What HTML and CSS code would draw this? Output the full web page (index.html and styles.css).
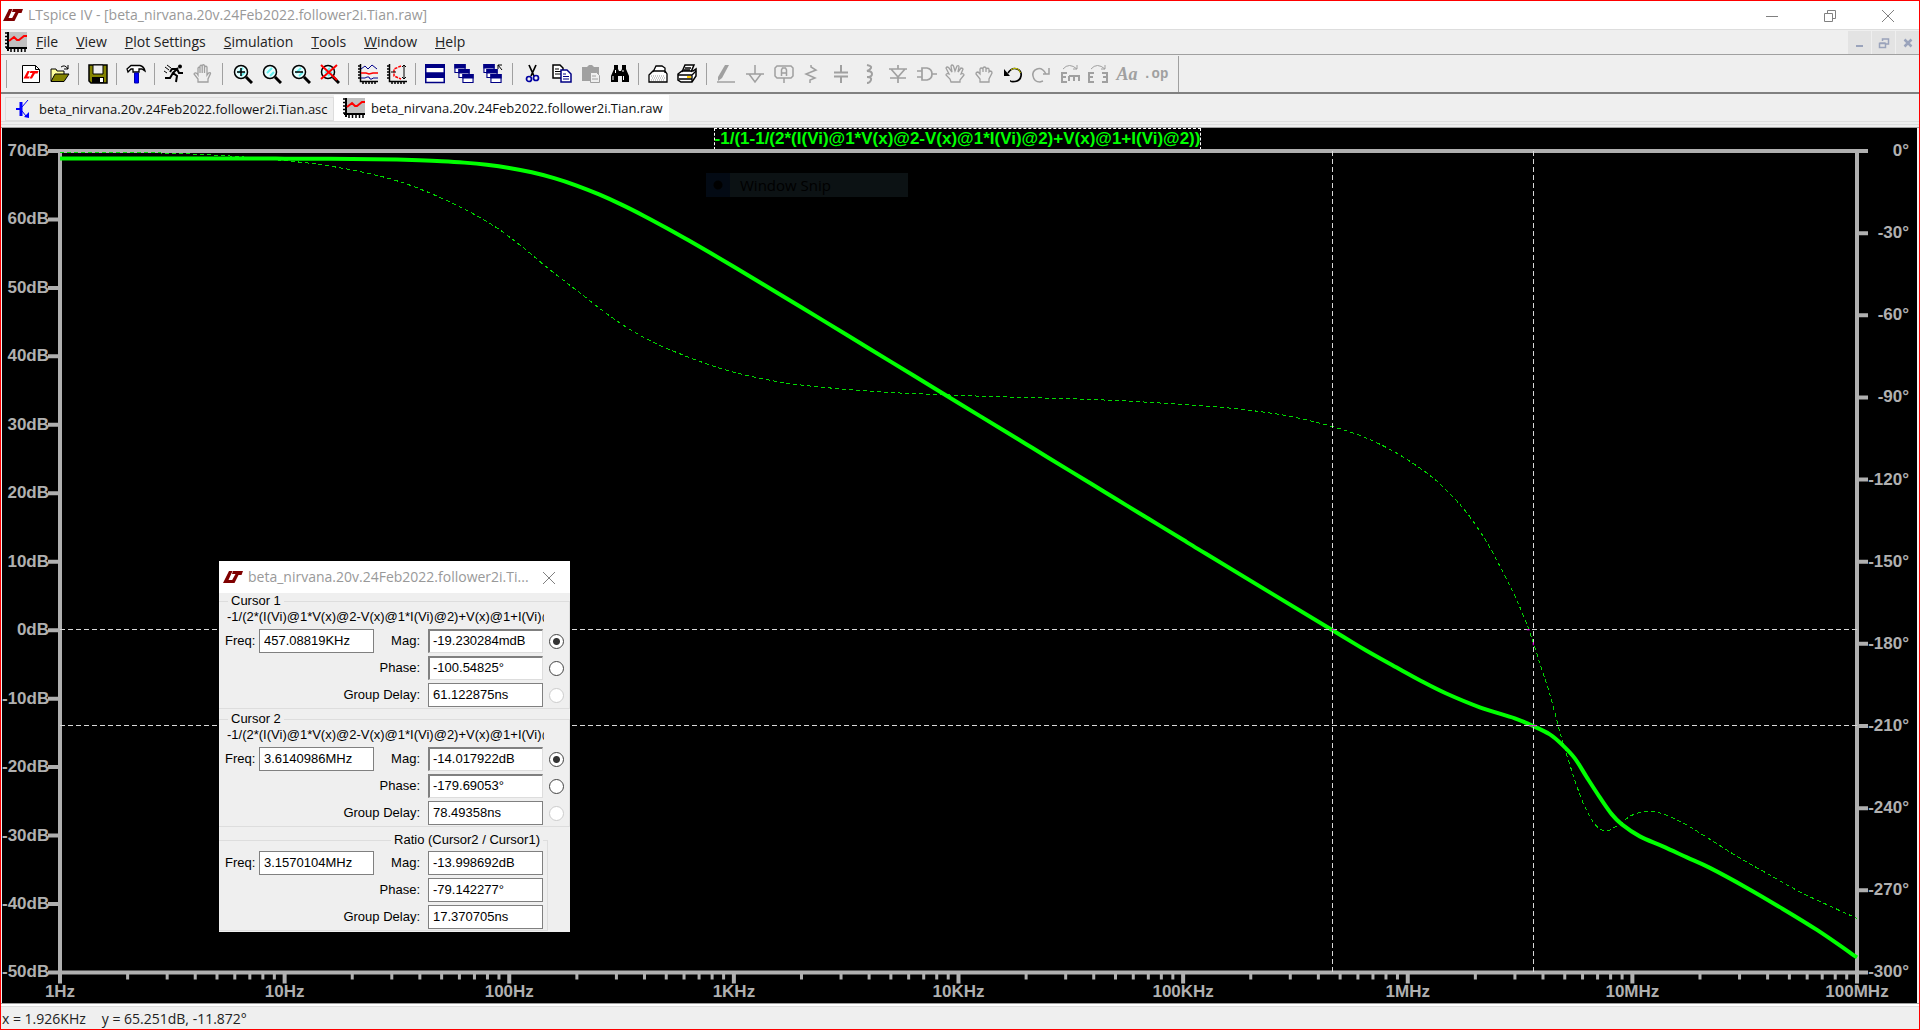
FILE: index.html
```html
<!DOCTYPE html>
<html lang="en">
<head>
<meta charset="utf-8">
<title>LTspice IV - [beta_nirvana.20v.24Feb2022.follower2i.Tian.raw]</title>
<link rel="stylesheet" href="styles.css">
<script src="plot.js" defer></script>
</head>
<body>
<svg class="defs" aria-hidden="true">
  <symbol id="logo" viewBox="0 0 20 14"><path fill="#7f0000" d="M6 1h3.500L5.500 10h4L8 13H0zM10 1h10l-1.500 4h-3l-4 8h-4l5-9H9z"/></symbol>
  <symbol id="wave" viewBox="0 0 22 22"><path fill="#c0c0c0" d="M3 1h19v15H3z"/><path stroke="#000" stroke-width="2" d="M3 1v19M1 17h21"/><path stroke="#000" stroke-width="1.5" d="M0 2h3M0 5.500h3M0 9h3M0 12.500h3M0 16h3M6 17v4M9.500 17v4M13 17v4M16.500 17v4M20 17v4"/><path fill="none" stroke="#f00" stroke-width="2" d="M4 10l5-4 3 3 2 0 5-4h3"/></symbol>
  <symbol id="lens" viewBox="0 0 20 20"><circle cx="8" cy="8" r="6.500" fill="#e8ffff" stroke="#000" stroke-width="1.500"/><path stroke="#6ee" stroke-width="2" d="M5 9l5-5M8 12l4-4"/><path stroke="#000" stroke-width="3" d="M13 13l6 6"/></symbol>
  <symbol id="win" viewBox="0 0 10 8"><path fill="#fff" stroke="#000084" d="M.5.5h9v7h-9z"/><path fill="#000084" d="M0 0h10v4H0z"/></symbol>
  <symbol id="axes" viewBox="0 0 20 20"><path fill="none" stroke="#000" stroke-width="1.500" d="M2.500 0v17.500H20M0 2h2M0 5h2M0 8h2M0 11h2M0 14h2M5 17v3M8 17v3M11 17v3M14 17v3M17 17v3"/></symbol>
  <symbol id="hand" viewBox="0 0 20 20"><path fill="none" stroke="currentColor" stroke-width="1.300" d="M5 18v-3L1 10q1-2 3-.5L5 11V4q1-1.500 2 0v5V2q1-1.500 2.200 0v7V1.500q1.300-1.500 2.300 0V9 3q1.500-1.500 2.500 0v8l1.500-2q2-1 2 .5L15 15v3z"/></symbol>
</svg>

<div class="window">
  <header class="titlebar">
    <svg class="logo"><use href="#logo"/></svg>
    <h1>LTspice IV - [beta_nirvana.20v.24Feb2022.follower2i.Tian.raw]</h1>
    <div class="caption-buttons">
      <button aria-label="Minimize"><svg viewBox="0 0 14 14"><path d="M1 7.500h12"/></svg></button>
      <button aria-label="Restore"><svg viewBox="0 0 14 14"><path d="M1.500 4.500h8v8h-8zM4.500 4V1.500h8v8H10"/></svg></button>
      <button aria-label="Close"><svg viewBox="0 0 14 14"><path d="M1 1l12 12M13 1L1 13"/></svg></button>
    </div>
  </header>

  <nav class="menubar">
    <svg class="wave"><use href="#wave"/></svg>
    <button><u>F</u>ile</button>
    <button><u>V</u>iew</button>
    <button><u>P</u>lot Settings</button>
    <button><u>S</u>imulation</button>
    <button><u>T</u>ools</button>
    <button><u>W</u>indow</button>
    <button><u>H</u>elp</button>
    <div class="child-buttons">
      <button aria-label="Minimize child"><svg viewBox="0 0 12 12"><path d="M2 9h7" stroke-width="2"/></svg></button>
      <button aria-label="Restore child"><svg viewBox="0 0 12 12"><path d="M1.500 6.500h6v4h-6zM1.500 6h6M4.500 4V2h6v5H8M4.500 2h6" stroke-width="1.500"/></svg></button>
      <button aria-label="Close child"><svg viewBox="0 0 12 12"><path d="M2.500 2.500l7 7M9.500 2.500l-7 7" stroke-width="2.500"/></svg></button>
    </div>
  </nav>

  <div class="toolbar">
    <div class="tools">
      <button aria-label="New schematic"><svg viewBox="0 0 20 20"><path fill="#fff" stroke="#000" d="M1.500 1.500h13l4 4v13h-17z"/><path fill="none" stroke="#000" d="M14.500 1.500v4h4"/><path fill="#f00" d="M6.500 7h2.300l-2.500 5.500h2.500l-1 2H2.500zM9.500 7h8l-1 2.500h-2.500l-3 5H8.500l3-5.500H8.700z"/></svg></button>
      <button aria-label="Open"><svg viewBox="0 0 20 20"><path fill="#ffff9c" stroke="#000" d="M1 17V5h5l1 2h7v3"/><path fill="#848400" stroke="#000" d="M1 17.500L5 10h14l-5 7.500z"/><path fill="none" stroke="#000" d="M11 3q4-3 7 2M18 1v4h-4"/></svg></button>
    </div>
    <i class="sep"></i>
    <div class="tools">
      <button aria-label="Save"><svg viewBox="0 0 20 20"><path fill="#848400" stroke="#000" stroke-width="1.500" d="M1 1h18v18H3l-2-2z"/><path fill="#efefef" stroke="#000" d="M5 1h10v9H5z"/><path fill="#000" d="M4 13h12v6H4z"/><path fill="#fff" d="M12 14h3v4h-3z"/></svg></button>
    </div>
    <i class="sep"></i>
    <div class="tools">
      <button aria-label="Control panel"><svg viewBox="0 0 20 20"><path fill="#fff" stroke="#000" stroke-width="1.300" d="M1 5l4-3.500h9q4 1 5 5.500l-3-2h-3v3H7V5H5L2 8z"/><path fill="#00f" stroke="#00a" d="M8.500 9h4v10h-4z"/></svg></button>
    </div>
    <i class="sep"></i>
    <div class="tools">
      <button aria-label="Run"><svg viewBox="0 0 20 20"><circle cx="16" cy="2.500" r="2"/><path fill="none" stroke="#000" stroke-width="2" d="M14 4l-5 5 4 3-1 6M9 9l-3 5H1M13 5l2 4h4M13 5H8L6 8"/><path stroke="#000" d="M1 3l4 3M3 1l4 3M0 7l3 2"/></svg></button>
      <button aria-label="Halt" disabled><svg><use href="#hand"/></svg></button>
    </div>
    <i class="sep wide"></i>
    <div class="tools">
      <button aria-label="Zoom in"><svg viewBox="0 0 20 20"><use href="#lens"/><path stroke="#000" stroke-width="1.500" d="M4 8h8M8 4v8"/></svg></button>
      <button aria-label="Zoom area"><svg><use href="#lens"/></svg></button>
      <button aria-label="Zoom out"><svg viewBox="0 0 20 20"><use href="#lens"/><path stroke="#000" stroke-width="1.500" d="M4 8h8"/></svg></button>
      <button aria-label="Zoom to fit"><svg viewBox="0 0 20 20"><use href="#lens"/><path stroke="#f00" stroke-width="2" d="M1 1l16 15M17 1L1 15"/></svg></button>
    </div>
    <i class="sep"></i>
    <div class="tools">
      <button aria-label="Autorange"><svg viewBox="0 0 20 20"><use href="#axes"/><path fill="none" stroke="#00008c" d="M3 5l4-3 3 3 4-4 5 4M3 14h4l2-1h2l1 2h2l1-1h5"/><path fill="none" stroke="#f00" stroke-width="1.500" d="M3 9h5l3 1 4-1h5"/></svg></button>
      <button aria-label="Pan"><svg viewBox="0 0 20 20"><use href="#axes"/><path fill="none" stroke="#f00" stroke-width="1.500" stroke-dasharray="3 1" d="M14 2L7 5v7l7 3"/><path fill="none" stroke="#000" d="M17 1v14M15 3l2-2 2 2M15 13l2 2 2-2M4 8h5"/></svg></button>
    </div>
    <i class="sep"></i>
    <div class="tools">
      <button aria-label="Tile"><svg viewBox="0 0 20 20"><path fill="#fff" stroke="#000084" stroke-width="1.500" d="M.75 1h18.500v8H.75zM.75 10.500h18.500v8H.75z"/><path fill="#000084" d="M0 0h20v4H0zM0 10h20v4H0z"/></svg></button>
      <button aria-label="Cascade"><svg viewBox="0 0 20 20"><use href="#win" x="0" y="0" width="12" height="9"/><use href="#win" x="4" y="5" width="12" height="9"/><use href="#win" x="8" y="10" width="12" height="9"/></svg></button>
      <button aria-label="Close all"><svg viewBox="0 0 20 20"><use href="#win" x="0" y="0" width="12" height="9"/><use href="#win" x="3" y="5" width="12" height="9"/><use href="#win" x="7" y="10" width="12" height="9"/><path fill="none" stroke="#000" d="M15 1h4M15 1v4M15 1l4 5"/></svg></button>
    </div>
    <i class="sep wide"></i>
    <div class="tools">
      <button aria-label="Cut"><svg viewBox="0 0 20 20"><path stroke="#000" stroke-width="1.700" d="M6 1l5 11M13 1L8 12"/><g fill="none" stroke="#0000a0" stroke-width="1.700"><circle cx="6" cy="15" r="2.500"/><circle cx="13" cy="14" r="2.500"/></g></svg></button>
      <button aria-label="Copy"><svg viewBox="0 0 20 20"><path fill="#fff" stroke="#000" stroke-width="1.500" d="M1 1h7l3 3v10H1z"/><path stroke="#000" d="M3 5h4M3 7.500h6M3 10h6"/><path fill="#fff" stroke="#000084" stroke-width="1.500" d="M9 6h6l4 4v8H9z"/><path stroke="#000084" d="M11 10h3M11 12.500h6M11 15h6"/></svg></button>
      <button aria-label="Paste" disabled><svg viewBox="0 0 20 20"><path fill="#a0a0a0" d="M1 3h5l2-2h3l2 2h5v14H1z"/><path fill="#efefef" stroke="#a0a0a0" d="M9.500 8.500h6l3 3v7h-9z"/><path stroke="#a0a0a0" d="M11 12h4M11 15h6"/></svg></button>
      <button aria-label="Find"><svg viewBox="0 0 20 20"><path d="M4 1h4v4l1 2h2l1-2V1h4v4l3 7v6h-7v-6H8v6H1v-6l3-7z"/><path stroke="#fff" d="M3 12v4M13.500 12v4M5.500 6v3M13 6v2"/></svg></button>
    </div>
    <i class="sep"></i>
    <div class="tools">
      <button aria-label="Print"><svg viewBox="0 0 20 20"><path fill="#fff" stroke="#000" stroke-width="1.300" d="M5 8l3-6h6l3 2v5M1 11l4-4h12l2 3v8H1z"/><path stroke="#999" stroke-dasharray="1 1" d="M3 12h13M4 14h13M3 16h13"/></svg></button>
      <button aria-label="Print setup"><svg viewBox="0 0 20 20"><path fill="#fff" stroke="#000" stroke-width="1.500" d="M5 8l3-7h9l-3 7M1 10l4-3h11l3-2v7l-4 6H4l-3-2z"/><path fill="none" stroke="#000" stroke-width="1.300" d="M8 4h6M7 6h6M1 11h14l4-4M2 15h13v3M15 11v5"/><path fill="#fc0" d="M10 12h4v2h-4z"/></svg></button>
    </div>
    <i class="sep wide"></i>
    <div class="tools draft">
      <button aria-label="Wire" disabled><svg viewBox="0 0 20 20"><path fill="none" stroke="currentColor" stroke-width="1.500" d="M1 18h18"/><path fill="currentColor" d="M9 1h4L6 14l-4 3v-4z"/></svg></button>
      <button aria-label="Ground" disabled><svg viewBox="0 0 20 20"><path fill="none" stroke="currentColor" stroke-width="1.500" d="M10 1v9M1 10h18M4 10l6 8 6-8"/></svg></button>
      <button aria-label="Label net" disabled><svg viewBox="0 0 20 20"><path fill="none" stroke="currentColor" stroke-width="1.500" d="M3 2h14l2 2v8l-2 2H3l-2-2V4zM10 14v5M7.500 12V6l1-2h3l1 2v6M7.500 9h5"/></svg></button>
      <button aria-label="Resistor" disabled><svg viewBox="0 0 20 20"><path fill="none" stroke="currentColor" stroke-width="1.500" d="M9 1v2l5 3-10 4 9 4-5 2v3"/></svg></button>
      <button aria-label="Capacitor" disabled><svg viewBox="0 0 20 20"><path fill="none" stroke="currentColor" stroke-width="2" d="M3 8.500h14M3 12.500h14M10 1v7M10 13v6"/></svg></button>
      <button aria-label="Inductor" disabled><svg viewBox="0 0 20 20"><path fill="none" stroke="currentColor" stroke-width="2" d="M8 1q5 1 4 3t-4 3q5 0 5 3t-5 3q5 0 4 3t-4 3"/></svg></button>
      <button aria-label="Diode" disabled><svg viewBox="0 0 20 20"><path fill="none" stroke="currentColor" stroke-width="1.700" d="M10 1v4M1 5h18M3 5l7 8 7-8M2 14h16M10 13v6"/></svg></button>
      <button aria-label="Component" disabled><svg viewBox="0 0 20 20"><path fill="none" stroke="currentColor" stroke-width="1.700" d="M5 4v12h5q5-1 5-6t-5-6zM0 7h5M0 13h5M15 10h5"/></svg></button>
      <button aria-label="Move" disabled><svg viewBox="0 0 20 20"><path fill="none" stroke="currentColor" stroke-width="1.300" d="M6 18l-1-3-4-4q0-2 3-1L1 4q1-2 3 0l3 4-1-6q1-2 2.500 0L10 7l2-5q2-1 2 1l-1 5 3-4q2 0 2 1l-2 5q3-1 3 1l-4 5v2z"/></svg></button>
      <button aria-label="Drag" disabled><svg viewBox="0 0 20 20"><path fill="none" stroke="currentColor" stroke-width="1.300" d="M6 18v-3l-4-5q0-2 2-2l2 2V5q1-2 3 0v3-4q1.500-2 3 0v4-3q2-1.500 3 0v3l1-1q2 0 2 2l-3 6v3z"/></svg></button>
      <button aria-label="Undo"><svg viewBox="0 0 20 20"><path fill="none" stroke="#000" stroke-width="1.700" d="M5 9Q9 3 14 5t4 7q-1 5-6 5.500t-4-1"/><path fill="none" stroke="#cc0" d="M8 6q4-3.500 8 0l1.500 3"/><path d="M1 5v7h6z"/></svg></button>
      <button aria-label="Redo" disabled><svg viewBox="0 0 20 20"><path fill="none" stroke="currentColor" stroke-width="1.500" d="M15 10Q11 3 6 5t-4 7q1 6 7 6l3-1M18 4v6h-6"/></svg></button>
      <button aria-label="Mirror" disabled><svg viewBox="0 0 20 20"><path fill="none" stroke="currentColor" stroke-width="2" d="M7 9H2v9h5M2 13h4M9 12h10v5M9 12v5M14 12v5"/><path fill="none" stroke="currentColor" d="M3 5q6-7 14 0M17 1v4h-4"/></svg></button>
      <button aria-label="Rotate" disabled><svg viewBox="0 0 20 20"><path fill="none" stroke="currentColor" stroke-width="2" d="M6 9H1v9h5M1 13h4M14 9h5v9h-5M19 13h-4"/><path fill="none" stroke="currentColor" d="M3 5q6-7 14 0M17 1v4h-4"/></svg></button>
      <button class="text" disabled>Aa</button>
      <button class="op" disabled>.op</button>
    </div>
    <i class="edge"></i>
  </div>

  <div class="tabs">
    <button class="tab"><svg class="bjt" viewBox="0 0 16 20"><path fill="none" stroke="#00f" stroke-width="2" d="M1 10h4"/><path stroke="#00f" stroke-width="3" d="M6 3v14"/><path stroke="#00f" d="M7 8l6-7M7 12l4 5"/><path fill="#00f" d="M14 19v-6l-5 5z"/></svg>beta_nirvana.20v.24Feb2022.follower2i.Tian.asc</button>
    <button class="tab active"><svg class="wave"><use href="#wave"/></svg>beta_nirvana.20v.24Feb2022.follower2i.Tian.raw</button>
  </div>

  <main class="plot">
    <div class="trace"><button>-1/(1-1/(2*(I(Vi)@1*V(x)@2-V(x)@1*I(Vi)@2)+V(x)@1+I(Vi)@2))</button></div>
    <div class="scale mag"><span>70dB</span><span>60dB</span><span>50dB</span><span>40dB</span><span>30dB</span><span>20dB</span><span>10dB</span><span>0dB</span><span>-10dB</span><span>-20dB</span><span>-30dB</span><span>-40dB</span><span>-50dB</span></div>
    <svg class="canvas" viewBox="61 151 1796 821" preserveAspectRatio="none" role="img" aria-label="Magnitude and phase against frequency">
      <path class="axis" d="M61 151H1857V972H61z"/>
      <path class="axis" id="major"/>
      <path class="minor" id="minor"/>
      <path class="phase" id="phase"/>
      <path class="magnitude" id="magnitude"/>
      <path class="cursor" d="M61 629.500H1857M61 725.500H1857M1332.500 151V972M1533.500 151V972"/>
      <path class="hit" d="M1332 629.500h3M1529 725.500h8M1527 629.500h3M1533.500 642v3"/>
    </svg>
    <div class="scale deg"><span>0°</span><span>-30°</span><span>-60°</span><span>-90°</span><span>-120°</span><span>-150°</span><span>-180°</span><span>-210°</span><span>-240°</span><span>-270°</span><span>-300°</span></div>
    <div class="scale freq"><span>1Hz</span><span>10Hz</span><span>100Hz</span><span>1KHz</span><span>10KHz</span><span>100KHz</span><span>1MHz</span><span>10MHz</span><span>100MHz</span></div>

    <div class="snip"><i></i>Window Snip</div>

    <form class="dialog">
      <header>
        <svg class="logo"><use href="#logo"/></svg>
        <h2>beta_nirvana.20v.24Feb2022.follower2i.Ti...</h2>
        <button type="button" aria-label="Close dialog"><svg viewBox="0 0 14 14"><path d="M1 1l12 12M13 1L1 13"/></svg></button>
      </header>
      <fieldset>
        <legend>Cursor 1</legend>
        <p>-1/(2*(I(Vi)@1*V(x)@2-V(x)@1*I(Vi)@2)+V(x)@1+I(Vi)@2)</p>
        <div class="fields">
          <label for="f1">Freq:</label><input id="f1" value="457.08819KHz">
          <label class="mid" for="m1">Mag:</label><input class="sunken" id="m1" value="-19.230284mdB"><input type="radio" name="c1" aria-label="Magnitude 1" checked>
          <label class="long" for="p1">Phase:</label><input class="sunken" id="p1" value="-100.54825°"><input type="radio" name="c1" aria-label="Phase 1">
          <label class="long" for="g1">Group Delay:</label><input id="g1" value="61.122875ns"><input type="radio" name="c1" aria-label="Group delay 1" disabled>
        </div>
      </fieldset>
      <fieldset>
        <legend>Cursor 2</legend>
        <p>-1/(2*(I(Vi)@1*V(x)@2-V(x)@1*I(Vi)@2)+V(x)@1+I(Vi)@2)</p>
        <div class="fields">
          <label for="f2">Freq:</label><input id="f2" value="3.6140986MHz">
          <label class="mid" for="m2">Mag:</label><input class="sunken" id="m2" value="-14.017922dB"><input type="radio" name="c2" aria-label="Magnitude 2" checked>
          <label class="long" for="p2">Phase:</label><input class="sunken" id="p2" value="-179.69053°"><input type="radio" name="c2" aria-label="Phase 2">
          <label class="long" for="g2">Group Delay:</label><input id="g2" value="78.49358ns"><input type="radio" name="c2" aria-label="Group delay 2" disabled>
        </div>
      </fieldset>
      <fieldset class="ratio">
        <legend>Ratio (Cursor2 / Cursor1)</legend>
        <div class="fields">
          <label for="f3">Freq:</label><input id="f3" value="3.1570104MHz">
          <label class="mid" for="m3">Mag:</label><input id="m3" value="-13.998692dB">
          <label class="long" for="p3">Phase:</label><input id="p3" value="-79.142277°">
          <label class="long" for="g3">Group Delay:</label><input id="g3" value="17.370705ns">
        </div>
      </fieldset>
    </form>
  </main>

  <footer class="status"><span>x = 1.926KHz</span><span>y = 65.251dB, -11.872°</span></footer>
</div>
</body>
</html>
```
FILE: styles.css
```css
* { box-sizing: border-box; }
body { margin: 0; background: #efefef; font: 14px/20px "Open Sans", "Noto Sans", sans-serif; color: #222; }
button { margin: 0; padding: 0; border: 0; background: none; font: inherit; color: inherit; }
h1, h2, p { margin: 0; font-weight: 400; white-space: nowrap; }
.defs { display: none; }

.window { display: flex; flex-direction: column; min-height: 100vh; border: 1px solid #f00; }
.logo { width: 20px; height: 14px; flex: none; }
.wave { width: 22px; height: 22px; flex: none; }

.titlebar { display: flex; align-items: center; height: 28px; padding: 0 2px; background: #fff; color: #999; }
.titlebar h1 { margin-left: 5px; font-size: 14px; }
.caption-buttons { display: flex; margin-left: auto; }
.caption-buttons button { width: 58px; height: 28px; }
.caption-buttons svg, .dialog header button svg { width: 14px; height: 14px; fill: none; stroke: #808080; vertical-align: middle; }

.menubar { display: flex; align-items: center; height: 26px; padding-left: 4px; border-top: 1px solid #ddd; border-bottom: 1px solid #a0a0a0; }
.menubar > button { margin-left: 18px; }
.menubar .wave + button { margin-left: 9px; }
.child-buttons { display: flex; gap: 1px; margin-left: auto; }
.child-buttons button { width: 23px; height: 23px; background: #e3e3e3; }
.child-buttons svg { width: 12px; height: 12px; fill: none; stroke: #9aa3bb; vertical-align: middle; }

.toolbar { display: flex; align-items: center; height: 39px; padding-left: 3px; border-bottom: 2px solid #808080; }
.toolbar::before { content: ""; width: 2px; height: 28px; margin-right: 9px; border-right: 1px solid #a0a0a0; }
.tools { display: flex; align-items: center; }
.tools button { width: 29px; height: 29px; color: #000; }
.tools button:disabled { color: #a0a0a0; }
.tools svg { width: 20px; height: 20px; vertical-align: middle; }
.sep { width: 9px; height: 22px; background: linear-gradient(#a0a0a0, #a0a0a0) center / 1px 100% no-repeat; }
.sep.wide { width: 11px; }
.draft { width: 458px; }
.draft button { flex: 1; min-width: 0; }
.draft .text { font: italic bold 18px/20px "Liberation Serif", serif; }
.draft .op { font: bold 14px/20px "Liberation Mono", monospace; }
.edge { width: 1px; height: 36px; margin-left: 8px; background: #a0a0a0; }

.tabs { display: flex; align-items: stretch; height: 34px; padding: 1px 0 6px 4px; background: linear-gradient(#efefef 27px, #ddd 27px, #ddd 28px, #efefef 28px, #efefef 30px, #ddd 30px, #ddd 31px, #efefef 31px); border-bottom: 1px solid #a0a0a0; font: 13px/20px "Open Sans", "Noto Sans", sans-serif; }
.tab { display: flex; align-items: center; width: 329px; margin-top: 2px; padding-left: 9px; border: 1px solid #ddd; color: #111; white-space: nowrap; }
.tab .bjt { flex: none; width: 16px; height: 20px; margin-right: 8px; }
.tab.active { width: 335px; margin-top: 0; border: 0; background: #fff; }
.tab .wave { margin-right: 6px; }

.plot { position: relative; flex: 1; display: grid; grid-template: 23px minmax(300px, 1fr) 31px / 58px minmax(0, 1fr) 60px; margin: 0 2px 0 1px; background: #000; font: bold 17px/20px "Liberation Sans", Arial, sans-serif; color: #b0b0b0; }
.trace { grid-area: 1 / 1 / 2 / 4; padding-right: 4px; text-align: center; }
.trace button { height: 22px; border: 1px dashed #fff; color: #0f0; white-space: nowrap; vertical-align: top; }
.scale { display: flex; justify-content: space-between; white-space: nowrap; }
.mag, .deg { flex-direction: column; margin: -10px 0; text-align: right; }
.mag { grid-area: 2 / 1; padding-right: 11px; }
.deg { grid-area: 2 / 3; padding-right: 8px; }
.freq { grid-area: 3 / 2; padding-top: 10px; }
.freq span { width: 0; display: flex; justify-content: center; }
.canvas { grid-area: 2 / 2; width: 100%; height: 100%; overflow: visible; }
.canvas path { fill: none; vector-effect: non-scaling-stroke; }
.axis { stroke: #b0b0b0; stroke-width: 4; }
.minor { stroke: #b0b0b0; stroke-width: 3; }
.magnitude { stroke: #0f0; stroke-width: 4; }
.phase { stroke: #00d800; stroke-width: 1; stroke-dasharray: 4 3; shape-rendering: crispEdges; }
.cursor { stroke: #d8d8d8; stroke-width: 1; stroke-dasharray: 5 3; shape-rendering: crispEdges; }
.hit { stroke: #e0e; stroke-width: 1; }

.snip { position: absolute; left: 704px; top: 45px; display: flex; align-items: center; gap: 10px; width: 202px; height: 24px; background: #0c1214; color: #000; font: 15px/24px "Open Sans", sans-serif; }
.snip i { width: 24px; height: 24px; background: radial-gradient(circle at 12px 12px, #000 4px, #030a14 5px); }

.dialog { position: absolute; left: 217px; top: 433px; width: 351px; height: 371px; background: #efefef; font: 13px/16px "Liberation Sans", Arial, sans-serif; color: #000; }
.dialog header { display: flex; align-items: center; height: 32px; padding: 0 14px 0 4px; background: #fff; color: #999; }
.dialog h2 { margin-left: 5px; font: 14px/20px "Open Sans", sans-serif; }
.dialog header button { margin-left: auto; }
fieldset { min-width: 0; margin: 0 0 2px; padding: 0 0 1px 6px; border: 1px solid #ddd; border-width: 1px 1px 1px 0; }
legend { margin-left: 3px; padding: 0 3px; }
fieldset p { margin-left: 2px; width: 317px; overflow: hidden; }
.fields { display: grid; grid-template-columns: 34px 115px 54px 115px 26px; grid-auto-rows: 24px; row-gap: 3px; align-items: center; margin-top: 4px; }
.fields .mid, .fields .long { padding-right: 8px; text-align: right; }
.fields .long { grid-column: 1 / 4; }
.fields input { width: 115px; height: 24px; margin: 0; padding: 0 0 2px 4px; border: 1px solid #808080; background: #fff; font: inherit; color: #000; }
.fields .sunken { border-width: 2px 1px 1px 2px; border-color: #808080 #ddd #ddd #808080; padding-left: 3px; }
.fields input[type="radio"] { appearance: none; width: 15px; height: 15px; margin-left: 6px; padding: 0; border: 1px solid #444; border-radius: 50%; }
.fields input[type="radio"]:checked { background: radial-gradient(circle, #333 3px, #fff 4px); }
.fields input[type="radio"]:disabled { border-color: #ccc; }
.ratio { width: 329px; margin: 5px 0 0; }
.ratio legend { margin: 0 4px 0 auto; }
.ratio .fields { grid-template-columns: 34px 115px 54px 115px; margin-top: 3px; }

.status { display: flex; gap: 16px; height: 26px; padding: 5px 0 0 1px; border-top: 1px solid #a0a0a0; box-shadow: inset 0 2px #fff, inset 0 3px #ddd; }
```
FILE: plot.js
```js
// Plot frame: 8 decades across, 120 dB / 300 degrees down.
const LEFT = 61, RIGHT = 1857, TOP = 151, BOTTOM = 972;
const DECADE = (RIGHT - LEFT) / 8, DB = (BOTTOM - TOP) / 120;

let major = '', minor = '';
for (let d = 0; d <= 8; d++) {
  const x = LEFT + d * DECADE;
  major += `M${x} ${BOTTOM}v11`;
  for (let n = 2; d < 8 && n < 10; n++) minor += `M${x + Math.log10(n) * DECADE} ${BOTTOM}v7`;
}
for (let i = 0; i <= 12; i++) major += `M${LEFT} ${TOP + i * 10 * DB}h-12`;
for (let i = 0; i <= 10; i++) major += `M${RIGHT} ${TOP + i * (BOTTOM - TOP) / 10}h11`;

// Single pole at 164 Hz up to about 150 kHz, then the sampled tail.
const magnitude = [];
for (let d = 0; d <= 5.1; d += 0.1) {
  const db = 68.9 - 10 * Math.log10(1 + 10 ** (2 * (d - 2.215)));
  magnitude.push([LEFT + d * DECADE, TOP + (70 - db) * DB]);
}
magnitude.push([1332, 629.5], [1366, 650], [1400, 669], [1420, 680], [1446, 693], [1480, 707], [1515, 718],
  [1533, 725.5], [1550, 734], [1562, 744], [1575, 758], [1587, 777], [1600, 797], [1612, 814], [1622, 824],
  [1640, 836], [1663, 846], [1687, 857], [1710, 867.5], [1747, 887.5], [1777, 905], [1817, 929.5], [1857, 957]);

const phase = [[61, 152], [126, 152.3], [177, 153.5], [231, 156], [286, 160.7], [324, 165], [366, 172.7], [400, 181.5],
  [433, 194], [467, 210], [497, 227.5], [522, 246], [551, 270], [577, 290], [606, 312.5], [631, 329.5], [660, 345],
  [701, 361.5], [734, 372], [770, 380], [803, 385], [852, 389.7], [897, 392.7], [946, 394.7], [995, 396.5],
  [1081, 399], [1138, 401.5], [1199, 405.5], [1220, 407], [1253, 410.5], [1287, 415.5], [1320, 423], [1353, 432.7],
  [1380, 444], [1407, 459], [1433, 477.5], [1453, 496.5], [1470, 516.5], [1487, 542], [1503, 571.5], [1517, 600],
  [1530, 632], [1540, 663], [1550, 694], [1561, 735], [1568, 758], [1575, 780], [1583, 802], [1591, 818],
  [1598, 827], [1606, 830.5], [1613, 828], [1622, 822], [1630, 816], [1640, 812], [1650, 811.2], [1663, 813.5],
  [1683, 822.5], [1707, 837], [1737, 856], [1767, 873], [1800, 891.5], [1833, 907], [1857, 918]];

function smooth(p) {
  let d = `M${p[0]}`;
  for (let i = 0; i < p.length - 1; i++) {
    const a = p[Math.max(i - 1, 0)], b = p[i], c = p[i + 1], e = p[Math.min(i + 2, p.length - 1)];
    d += `C${b[0] + (c[0] - a[0]) / 6} ${b[1] + (c[1] - a[1]) / 6} ${c[0] - (e[0] - b[0]) / 6} ${c[1] - (e[1] - b[1]) / 6} ${c[0]} ${c[1]}`;
  }
  return d;
}

const set = (id, d) => document.getElementById(id).setAttribute('d', d);
set('major', major);
set('minor', minor);
set('magnitude', smooth(magnitude));
set('phase', smooth(phase));
```
